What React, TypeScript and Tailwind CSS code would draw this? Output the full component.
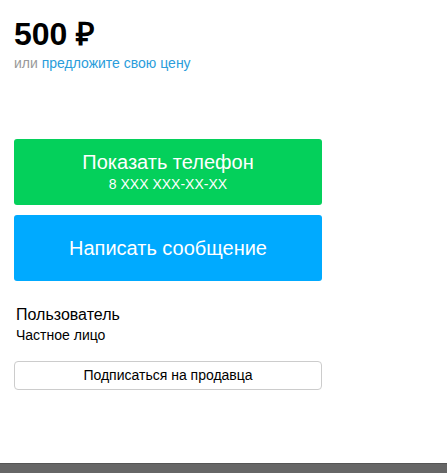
import React from 'react';

const font = { fontFamily: '"Liberation Sans", Arial, sans-serif' };

export default function App() {
  return (
    <div className="relative h-[473px] w-[447px] overflow-hidden bg-white text-black" style={font}>
      <div className="pl-[14px] pt-[15px]">
        {/* Price */}
        <div className="text-[32px] font-bold leading-[38px]">500 ₽</div>
        <div className="text-[14px] leading-[20px] text-[#999]">
          или <a className="text-[#2a9ddb]">предложите свою цену</a>
        </div>

        {/* Actions */}
        <div className="mt-[66px] flex w-[308px] flex-col gap-[10px]">
          <button className="flex h-[66px] flex-col items-center justify-center rounded-[3px] bg-[#04d05b] text-white">
            <span className="text-[20px] leading-[20px]">Показать телефон</span>
            <span className="mt-[4px] text-[14px] leading-[16px]">8 XXX XXX-XX-XX</span>
          </button>
          <button className="flex h-[66px] items-center justify-center rounded-[3px] bg-[#00aaff] text-[20px] text-white">
            Написать сообщение
          </button>
        </div>

        {/* Seller */}
        <div className="ml-[2px] mt-[24px] text-[16px] leading-[20px]">Пользователь</div>
        <div className="ml-[2px] mt-[1px] text-[14px] leading-[18px]">Частное лицо</div>
        <button className="mt-[17px] flex h-[29px] w-[308px] items-center justify-center rounded-[4px] border border-[#ccc] bg-white text-[14px]">
          Подписаться на продавца
        </button>
      </div>

      <div className="absolute bottom-0 left-0 h-[10px] w-full border-t border-[#555] bg-[#666]" />
    </div>
  );
}
